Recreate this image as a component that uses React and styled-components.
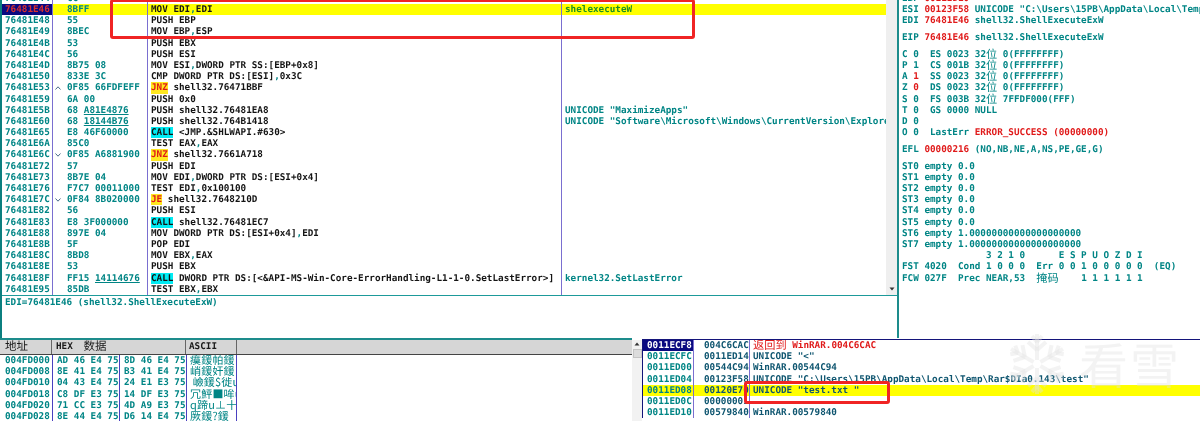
import styled, { createGlobalStyle } from "styled-components";

const ROW = 11.2;
const TEAL = "#008585";
const LINE = "#7a6fd0";

const GlobalStyle = createGlobalStyle`
  html, body {
    margin: 0;
    padding: 0;
    background: #fff;
  }
  * {
    box-sizing: border-box;
  }
`;

const Window = styled.div`
  position: relative;
  width: 1200px;
  height: 421px;
  overflow: hidden;
  background: #fff;
  color: ${TEAL};
  font-family: "DejaVu Sans Mono", "Liberation Mono", monospace;
  font-size: 9.3px;
  font-weight: 700;
  line-height: ${ROW}px;
  white-space: pre;
  text-rendering: geometricPrecision;
  filter: blur(0.35px);
`;

const TopArea = styled.div`
  display: flex;
  height: 338px;
`;

const LeftColumn = styled.div`
  display: flex;
  flex-direction: column;
  width: 899px;
  border-left: 2px solid #0b7f7f;
  border-right: 2px solid #1d8c8c;
`;

const CodePane = styled.div`
  display: flex;
  height: 296px;
  border-bottom: 1px solid #1d9a9a;
`;

const CodeTable = styled.div`
  flex: 1;
  min-width: 0;
  overflow: hidden;
`;

const Scrollbar = styled.div`
  position: relative;
  display: flex;
  align-items: flex-end;
  justify-content: center;
  width: 11px;
  padding-bottom: 4px;
  background: #efefef;
  color: #333;
`;

const CodeRow = styled.div`
  display: grid;
  grid-template-columns: 50px 95px 414px 1fr;
  height: ${ROW}px;
  background: ${(p) => (p.$active ? "#ffff00" : "transparent")};
  &:first-child {
    margin-top: -7.2px;
  }
`;

const Cell = styled.div`
  overflow: hidden;
  height: ${ROW}px;
  padding-left: ${(p) => p.$pad || 0}px;
  border-left: ${(p) => (p.$line ? `1px solid ${LINE}` : "none")};
`;

const AddrCell = styled(Cell)`
  padding-left: 3px;
  background: ${(p) => (p.$active ? "#0a0a80" : "#fff")};
  color: ${(p) => (p.$active ? "#d83030" : TEAL)};
`;

const Mark = styled.span`
  display: inline-flex;
  align-items: center;
  width: 14px;
  height: ${ROW}px;
  padding-left: 2px;
  vertical-align: top;
  color: #4a6a8a;
`;

const Under = styled.span`
  text-decoration: underline;
  text-underline-offset: 1px;
  text-decoration-thickness: 1px;
`;

const Asm = styled.span`
  color: #141414;
`;

const Comma = styled.span`
  color: ${TEAL};
`;

const Tag = styled.span`
  display: inline-block;
  height: ${ROW}px;
  background: ${(p) => (p.$call ? "#00ecf4" : "#ffe820")};
  color: ${(p) => (p.$call ? "#111" : "#e01818")};
`;

const Note = styled.span`
  color: ${(p) => (p.$green ? "#1c8f22" : TEAL)};
`;

const InfoPane = styled.div`
  flex: 1;
  padding: 1px 0 0 3px;
`;

const RegPane = styled.div`
  flex: 1;
  min-width: 0;
  padding-left: 3px;
  overflow: hidden;
`;

const RegGroup = styled.div`
  margin-top: ${(p) => (p.$first ? -7.2 : ROW / 2)}px;
`;

const RegLine = styled.div`
  height: ${ROW}px;
`;

const Red = styled.span`
  color: #e01a1a;
`;

const Thin = styled.span`
  display: inline-block;
  width: ${(p) => p.$w}px;
  height: ${ROW}px;
  font-family: "Noto Sans CJK SC", sans-serif;
  font-size: 11.2px;
  font-weight: 400;
  line-height: ${ROW}px;
  vertical-align: top;
`;

const BottomArea = styled.div`
  display: flex;
  height: 83px;
`;

const DumpPane = styled.div`
  flex: none;
  width: 632px;
  border-top: 2px solid #1d8c8c;
  overflow: hidden;
`;

const DumpHeader = styled.div`
  display: grid;
  grid-template-columns: 52px 134px 51px 1fr;
  height: 15px;
  background: #d6d6d6;
  border-bottom: 1px solid #444;
  color: #1a1a1a;
`;

const HeadCell = styled.div`
  display: flex;
  align-items: center;
  gap: 5px;
  padding-left: ${(p) => p.$pad}px;
  border-right: ${(p) => (p.$end ? "none" : "1px solid #666")};
`;

const HeadCjk = styled.span`
  font-family: "Noto Sans CJK SC", sans-serif;
  font-size: 11.5px;
  font-weight: 400;
`;

const DumpRow = styled.div`
  display: grid;
  grid-template-columns: 52px 67px 67px 51px;
  height: ${ROW}px;
`;

const DumpCell = styled(Cell)`
  border-left: ${(p) => (p.$line ? "1px solid #4a40c0" : "none")};
`;

const DumpText = styled(DumpCell)`
  border-right: 1px solid #4a40c0;
  font-family: "Noto Sans CJK SC", sans-serif;
  font-size: 11px;
  font-weight: 400;
  letter-spacing: 0.2px;
`;

const StackBar = styled.div`
  flex: none;
  display: flex;
  flex-direction: column;
  align-items: center;
  width: 10px;
  padding-top: 2px;
  margin-top: 2px;
  background: #f2f2f2;
  color: #333;
`;

const StackThumb = styled.div`
  width: 9px;
  height: 9px;
  margin-top: 3px;
  background: #dcdcdc;
  border: 1px solid #c4c4c4;
`;

const StackPane = styled.div`
  flex: 1;
  min-width: 0;
  margin-top: 1px;
  border-top: 1px solid #14147a;
  overflow: hidden;
`;

const StackRow = styled.div`
  display: grid;
  grid-template-columns: 51px 56px 1fr;
  height: ${ROW}px;
  background: ${(p) => (p.$active ? "#ffff00" : "transparent")};
`;

const StackAddr = styled.div`
  height: ${ROW}px;
  padding-left: 4px;
  border-left: 1px solid #14147a;
  background: ${(p) => (p.$sel ? "#0a0a80" : "transparent")};
  color: ${(p) => (p.$sel ? "#fff" : TEAL)};
`;

const StackValue = styled(Cell)`
  color: #0f5670;
`;

const StackNote = styled(Cell)`
  color: #0f5670;
`;

const Annotation = styled.div`
  position: absolute;
  left: ${(p) => p.$x}px;
  top: ${(p) => p.$y}px;
  width: ${(p) => p.$w}px;
  height: ${(p) => p.$h}px;
  border: 3px solid #f02424;
  border-radius: 3px;
`;

const Watermark = styled.div`
  position: absolute;
  left: 1009px;
  top: 332px;
  display: flex;
  align-items: center;
  gap: 14px;
  color: rgba(226, 226, 226, 0.4);
  pointer-events: none;
`;

const WatermarkText = styled.div`
  font-family: "Noto Sans CJK SC", sans-serif;
  font-size: 49px;
  font-weight: 400;
  line-height: 60px;
  letter-spacing: 2px;
`;

const Chevron = ({ up }) => (
  <svg width="6" height="4" viewBox="0 0 6 4">
    <path d={up ? "M0.5 3.5 L3 0.8 L5.5 3.5" : "M0.5 0.5 L3 3.2 L5.5 0.5"} fill="none" stroke="currentColor" strokeWidth="1" />
  </svg>
);

const Arrow = ({ up }) => (
  <svg width="6" height="4" viewBox="0 0 6 4">
    <path d={up ? "M3 0.5 L5.5 3.5 L0.5 3.5 Z" : "M0.5 0.5 L5.5 0.5 L3 3.5 Z"} fill="currentColor" />
  </svg>
);

const Snowflake = () => (
  <svg width="56" height="64" viewBox="-28 -32 56 64" fill="none" stroke="currentColor" strokeWidth="4">
    {[0, 60, 120, 180, 240, 300].map((a) => (
      <g key={a} transform={`rotate(${a})`}>
        <path d="M0 -4 L0 -30" />
        <path d="M0 -14 L-9 -22 M0 -14 L9 -22" />
        <path d="M0 -22 L-5 -28 M0 -22 L5 -28" />
      </g>
    ))}
  </svg>
);

const code = [
  { addr: "76481E44", hex: "CC", op: "INT3" },
  { addr: "76481E46", hex: "8BFF", op: "MOV EDI,EDI", note: "shelexecuteW", active: true },
  { addr: "76481E48", hex: "55", op: "PUSH EBP" },
  { addr: "76481E49", hex: "8BEC", op: "MOV EBP,ESP" },
  { addr: "76481E4B", hex: "53", op: "PUSH EBX" },
  { addr: "76481E4C", hex: "56", op: "PUSH ESI" },
  { addr: "76481E4D", hex: "8B75 08", op: "MOV ESI,DWORD PTR SS:[EBP+0x8]" },
  { addr: "76481E50", hex: "833E 3C", op: "CMP DWORD PTR DS:[ESI],0x3C" },
  { addr: "76481E53", mark: "up", hex: "0F85 66FDFEFF", tag: "JNZ", op: " shell32.76471BBF" },
  { addr: "76481E59", hex: "6A 00", op: "PUSH 0x0" },
  { addr: "76481E5B", hex: "68 ", under: "A81E4876", op: "PUSH shell32.76481EA8", note: 'UNICODE "MaximizeApps"' },
  { addr: "76481E60", hex: "68 ", under: "18144B76", op: "PUSH shell32.764B1418", note: 'UNICODE "Software\\Microsoft\\Windows\\CurrentVersion\\Explorer"' },
  { addr: "76481E65", hex: "E8 46F60000", tag: "CALL", call: true, op: " <JMP.&SHLWAPI.#630>" },
  { addr: "76481E6A", hex: "85C0", op: "TEST EAX,EAX" },
  { addr: "76481E6C", mark: "down", hex: "0F85 A6881900", tag: "JNZ", op: " shell32.7661A718" },
  { addr: "76481E72", hex: "57", op: "PUSH EDI" },
  { addr: "76481E73", hex: "8B7E 04", op: "MOV EDI,DWORD PTR DS:[ESI+0x4]" },
  { addr: "76481E76", hex: "F7C7 00011000", op: "TEST EDI,0x100100" },
  { addr: "76481E7C", mark: "down", hex: "0F84 8B020000", tag: "JE", op: " shell32.7648210D" },
  { addr: "76481E82", hex: "56", op: "PUSH ESI" },
  { addr: "76481E83", hex: "E8 3F000000", tag: "CALL", call: true, op: " shell32.76481EC7" },
  { addr: "76481E88", hex: "897E 04", op: "MOV DWORD PTR DS:[ESI+0x4],EDI" },
  { addr: "76481E8B", hex: "5F", op: "POP EDI" },
  { addr: "76481E8C", hex: "8BD8", op: "MOV EBX,EAX" },
  { addr: "76481E8E", hex: "53", op: "PUSH EBX" },
  { addr: "76481E8F", hex: "FF15 ", under: "14114676", tag: "CALL", call: true, op: " DWORD PTR DS:[<&API-MS-Win-Core-ErrorHandling-L1-1-0.SetLastError>]", note: "kernel32.SetLastError" },
  { addr: "76481E95", hex: "85DB", op: "TEST EBX,EBX" },
];

const dump = [
  ["004FD000", "AD 46 E4 75", "8D 46 E4 75", "瘼鍰帕鍰"],
  ["004FD008", "8E 41 E4 75", "B3 41 E4 75", "峭鍰奸鍰"],
  ["004FD010", "04 43 E4 75", "24 E1 E3 75", " 嶮鍰$徙u"],
  ["004FD018", "C8 DF E3 75", "14 DF E3 75", "冗鮃■哞u"],
  ["004FD020", "71 CC E3 75", "4D A9 E3 75", "q蹄u⊥十u"],
  ["004FD028", "8E 44 E4 75", "D6 14 E4 75", "厥鍰?鍰"],
];

const stack = [
  { addr: "0011ECF8", value: "004C6CAC", ret: "WinRAR.004C6CAC", sel: true },
  { addr: "0011ECFC", value: "0011ED14", note: 'UNICODE "<"' },
  { addr: "0011ED00", value: "00544C94", note: "WinRAR.00544C94" },
  { addr: "0011ED04", value: "00123F58", note: 'UNICODE "C:\\Users\\15PB\\AppData\\Local\\Temp\\Rar$DIa0.143\\test"' },
  { addr: "0011ED08", value: "00120E70", note: 'UNICODE "test.txt "', active: true },
  { addr: "0011ED0C", value: "00000001" },
  { addr: "0011ED10", value: "00579840", note: "WinRAR.00579840" },
];

const flags = [
  ["C 0", "ES 0023", "0(FFFFFFFF)"],
  ["P 1", "CS 001B", "0(FFFFFFFF)"],
  ["A ", "SS 0023", "0(FFFFFFFF)", "1"],
  ["Z ", "DS 0023", "0(FFFFFFFF)", "0"],
  ["S 0", "FS 003B", "7FFDF000(FFF)"],
];

const withCommas = (text) =>
  text.split(",").map((part, i) => (
    <span key={i}>
      {i > 0 && <Comma>,</Comma>}
      {part}
    </span>
  ));

const App = () => {
  return (
    <Window>
      <GlobalStyle />
      <TopArea>
        <LeftColumn>
          <CodePane>
            <CodeTable>
              {code.map((row) => (
                <CodeRow key={row.addr} $active={row.active}>
                  <AddrCell $active={row.active}>{row.addr}</AddrCell>
                  <Cell $line>
                    <Mark>{row.mark && <Chevron up={row.mark === "up"} />}</Mark>
                    {row.hex}
                    {row.under && <Under>{row.under}</Under>}
                  </Cell>
                  <Cell $line $pad={3}>
                    {row.tag && <Tag $call={row.call}>{row.tag}</Tag>}
                    <Asm>{withCommas(row.op)}</Asm>
                  </Cell>
                  <Cell $line $pad={3}>
                    {row.note && <Note $green={row.active}>{row.note}</Note>}
                  </Cell>
                </CodeRow>
              ))}
            </CodeTable>
            <Scrollbar>
              <Arrow />
            </Scrollbar>
          </CodePane>
          <InfoPane>EDI=76481E46 (shell32.ShellExecuteExW)</InfoPane>
        </LeftColumn>
        <RegPane>
          <RegGroup $first>
            <RegLine>EBP <Red>0011ED10</Red></RegLine>
            <RegLine>ESI <Red>00123F58</Red> UNICODE "C:\Users\15PB\AppData\Local\Temp\Rar$DIa0.143\test"</RegLine>
            <RegLine>EDI <Red>76481E46</Red> shell32.ShellExecuteExW</RegLine>
          </RegGroup>
          <RegGroup>
            <RegLine>EIP <Red>76481E46</Red> shell32.ShellExecuteExW</RegLine>
          </RegGroup>
          <RegGroup>
            {flags.map(([flag, seg, rest, red]) => (
              <RegLine key={seg}>
                {flag}
                {red && <Red>{red}</Red>}  {seg} 32<Thin $w={16.8}>位</Thin>{rest}
              </RegLine>
            ))}
            <RegLine>T 0  GS 0000 NULL</RegLine>
            <RegLine>D 0</RegLine>
            <RegLine>O 0  LastErr <Red>ERROR_SUCCESS (00000000)</Red></RegLine>
          </RegGroup>
          <RegGroup>
            <RegLine>EFL <Red>00000216</Red> (NO,NB,NE,A,NS,PE,GE,G)</RegLine>
          </RegGroup>
          <RegGroup>
            <RegLine>ST0 empty 0.0</RegLine>
            <RegLine>ST1 empty 0.0</RegLine>
            <RegLine>ST2 empty 0.0</RegLine>
            <RegLine>ST3 empty 0.0</RegLine>
            <RegLine>ST4 empty 0.0</RegLine>
            <RegLine>ST5 empty 0.0</RegLine>
            <RegLine>ST6 empty 1.00000000000000000000</RegLine>
            <RegLine>ST7 empty 1.00000000000000000000</RegLine>
            <RegLine>               3 2 1 0      E S P U O Z D I</RegLine>
            <RegLine>FST 4020  Cond 1 0 0 0  Err 0 0 1 0 0 0 0 0  (EQ)</RegLine>
            <RegLine>FCW 027F  Prec NEAR,53  <Thin $w={44.8}>掩码</Thin>1 1 1 1 1 1</RegLine>
          </RegGroup>
        </RegPane>
      </TopArea>
      <BottomArea>
        <DumpPane>
          <DumpHeader>
            <HeadCell $pad={5}><HeadCjk>地址</HeadCjk></HeadCell>
            <HeadCell $pad={4}>HEX <HeadCjk>数据</HeadCjk></HeadCell>
            <HeadCell $pad={3}>ASCII</HeadCell>
            <HeadCell $end />
          </DumpHeader>
          {dump.map(([addr, a, b, text]) => (
            <DumpRow key={addr}>
              <DumpCell $pad={5}>{addr}</DumpCell>
              <DumpCell $line $pad={4}>{a}</DumpCell>
              <DumpCell $line $pad={4}>{b}</DumpCell>
              <DumpText $line $pad={3}>{text}</DumpText>
            </DumpRow>
          ))}
        </DumpPane>
        <StackBar>
          <Arrow up />
          <StackThumb />
        </StackBar>
        <StackPane>
          {stack.map((row) => (
            <StackRow key={row.addr} $active={row.active}>
              <StackAddr $sel={row.sel}>{row.addr}</StackAddr>
              <StackValue $line $pad={10}>{row.value}</StackValue>
              <StackNote $line $pad={3}>
                {row.ret ? (
                  <Red><Thin $w={33.6}>返回到</Thin> {row.ret}</Red>
                ) : (
                  row.note
                )}
              </StackNote>
            </StackRow>
          ))}
        </StackPane>
      </BottomArea>
      <Annotation $x={110} $y={-1} $w={585} $h={40} />
      <Annotation $x={744} $y={381} $w={146} $h={23} />
      <Watermark>
        <Snowflake />
        <WatermarkText>看雪</WatermarkText>
      </Watermark>
    </Window>
  );
};

export default App;
